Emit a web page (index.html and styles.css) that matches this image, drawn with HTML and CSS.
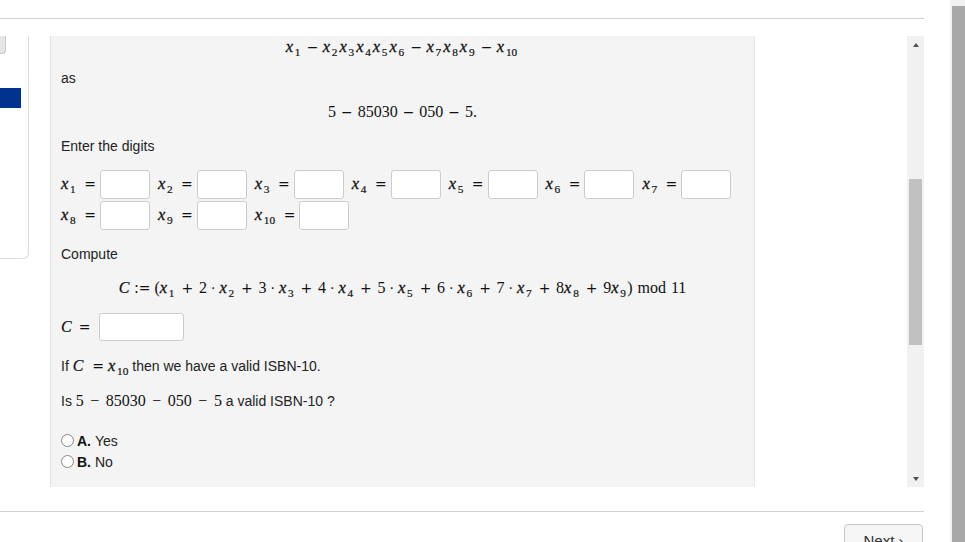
FILE: index.html
```html
<!DOCTYPE html>
<html lang="en">
<head>
<meta charset="utf-8">
<title>ISBN-10 check</title>
<link rel="stylesheet" href="styles.css">
</head>
<body>
<div class="window">
  <div class="viewport">
    <div class="topbar"></div>
    <div class="scroller">
      <div class="content">
        <div class="sidebar">
          <div class="sb-btn"></div>
          <div class="sb-active"></div>
        </div>
        <div class="question">
          <div class="disp f1"><span class="v">x</span><span class="s">1</span><span class="op">−</span><span class="v">x</span><span class="s">2</span><span class="v">x</span><span class="s">3</span><span class="v">x</span><span class="s">4</span><span class="v">x</span><span class="s">5</span><span class="v">x</span><span class="s">6</span><span class="op">−</span><span class="v">x</span><span class="s">7</span><span class="v">x</span><span class="s">8</span><span class="v">x</span><span class="s">9</span><span class="op">−</span><span class="v">x</span><span class="s">10</span></div>
          <p class="t as">as</p>
          <div class="disp f2">5<span class="op">−</span>85030<span class="op">−</span>050<span class="op">−</span>5.</div>
          <p class="t gap13">Enter the digits</p>
          <div class="fields">
            <div class="frow">
              <div class="field"><span class="m"><span class="v">x</span><span class="s">1</span><span class="eq">=</span></span><span class="box"></span></div>
              <div class="field"><span class="m"><span class="v">x</span><span class="s">2</span><span class="eq">=</span></span><span class="box"></span></div>
              <div class="field"><span class="m"><span class="v">x</span><span class="s">3</span><span class="eq">=</span></span><span class="box"></span></div>
              <div class="field"><span class="m"><span class="v">x</span><span class="s">4</span><span class="eq">=</span></span><span class="box"></span></div>
              <div class="field"><span class="m"><span class="v">x</span><span class="s">5</span><span class="eq">=</span></span><span class="box"></span></div>
              <div class="field"><span class="m"><span class="v">x</span><span class="s">6</span><span class="eq">=</span></span><span class="box"></span></div>
              <div class="field"><span class="m"><span class="v">x</span><span class="s">7</span><span class="eq">=</span></span><span class="box"></span></div>
            </div>
            <div class="frow">
              <div class="field"><span class="m"><span class="v">x</span><span class="s">8</span><span class="eq">=</span></span><span class="box"></span></div>
              <div class="field"><span class="m"><span class="v">x</span><span class="s">9</span><span class="eq">=</span></span><span class="box"></span></div>
              <div class="field"><span class="m"><span class="v">x</span><span class="s">10</span><span class="eq">=</span></span><span class="box"></span></div>
            </div>
          </div>
          <p class="t gap14">Compute</p>
          <div class="disp cform"><span class="vc">C</span><span class="rel">:<span class="eqg">=</span></span>(<span class="v">x</span><span class="s">1</span><span class="op">+</span>2<span class="dot">·</span><span class="v">x</span><span class="s">2</span><span class="op">+</span>3<span class="dot">·</span><span class="v">x</span><span class="s">3</span><span class="op">+</span>4<span class="dot">·</span><span class="v">x</span><span class="s">4</span><span class="op">+</span>5<span class="dot">·</span><span class="v">x</span><span class="s">5</span><span class="op">+</span>6<span class="dot">·</span><span class="v">x</span><span class="s">6</span><span class="op">+</span>7<span class="dot">·</span><span class="v">x</span><span class="s">7</span><span class="op">+</span>8<span class="v">x</span><span class="s">8</span><span class="op">+</span>9<span class="v">x</span><span class="s">9</span>)<span class="mod">mod</span>11</div>
          <div class="crow"><span class="m"><span class="vc">C</span><span class="eq">=</span></span><span class="box wide"></span></div>
          <p class="t gap15">If <span class="m"><span class="vc">C</span><span class="eq">=</span><span class="v">x</span><span class="s">10</span></span> then we have a valid ISBN-10.</p>
          <p class="t gap14">Is <span class="m isbn">5<span class="mm">−</span>85030<span class="mm">−</span>050<span class="mm">−</span>5</span> a valid ISBN-10 ?</p>
          <div class="choices">
            <label class="choice"><span class="radio"></span><b class="letter">A.</b>Yes</label>
            <label class="choice"><span class="radio"></span><b class="letter">B.</b>No</label>
          </div>
        </div>
      </div>
      <div class="vscroll">
        <div class="arr arr-up"></div>
        <div class="vthumb"></div>
        <div class="vspace"></div>
        <div class="arr arr-down"></div>
      </div>
    </div>
    <div class="bottombar">
      <div class="next">Next ›</div>
    </div>
  </div>
  <div class="page-scroll"><div class="page-thumb"></div></div>
</div>
</body>
</html>
```
FILE: styles.css
```css
* { box-sizing: border-box; }
html, body { margin: 0; height: 100%; overflow: hidden; background: #fff; }
body { font-family: "Liberation Sans", Arial, sans-serif; font-size: 14px; color: #222; }

.window { display: flex; width: 965px; height: 542px; }
.viewport { width: 950px; display: flex; flex-direction: column; }

.topbar { height: 19px; width: 924px; border-bottom: 1px solid #cfd2d4; flex-shrink: 0; }

.scroller { margin-top: 17px; height: 451px; width: 924px; display: flex; flex-shrink: 0; }
.content { flex: 1; display: flex; align-items: flex-start; }

.sidebar {
  width: 29px; height: 223px;
  border-right: 1px solid #ddd; border-bottom: 1px solid #ddd;
  border-bottom-right-radius: 6px;
  display: flex; flex-direction: column;
}
.sb-btn {
  width: 6px; height: 18px; background: #e6e6e6;
  border-right: 1px solid #c8c8c8; border-bottom: 1px solid #c8c8c8;
  border-bottom-right-radius: 4px;
}
.sb-active { margin-top: 34px; width: 21px; height: 20px; background: #00338d; }

.question {
  margin-left: 21px; width: 705px; align-self: stretch;
  background: #f4f4f4;
  border-left: 1px solid #e2e2e2; border-right: 1px solid #e8e8e8;
  padding: 0 10px 16px;
}

.t { margin: 0; line-height: 20px; }
.as { margin-top: 10px; }
.gap13 { margin-top: 13px; }
.gap14 { margin-top: 14px; }
.gap15 { margin-top: 15px; }

/* math */
.disp {
  text-align: center; font-family: "Liberation Serif", serif; font-size: 16px;
  line-height: 22px; height: 22px; white-space: nowrap; color: #111;
}
.f2 { margin-top: 13px; }
.cform { margin-top: 13px; }
.m { font-family: "Liberation Serif", serif; font-size: 16px; white-space: nowrap; color: #111; }
.v {
  font-family: "Liberation Serif", serif; font-style: italic; font-size: 16.5px;
  margin-right: 1.7px; -webkit-text-stroke: 0.3px #111;
}
.vc { font-style: italic; margin-right: 1px; -webkit-text-stroke: 0.2px #111; }
.s { font-size: 11.3px; vertical-align: -4px; line-height: 1; -webkit-text-stroke: 0.2px #111; }
.op { font-family: "DejaVu Sans", sans-serif; font-size: 14px; margin: 0 4.3px; }
.f1 .s { margin-right: 2px; }
.f2 .op { margin: 0 5px; }
.cform .op { margin: 0 5.7px; }
.cform .s { margin-right: 1.3px; }
.dot { font-family: "DejaVu Sans", sans-serif; font-size: 14px; margin: 0 4px; }
.rel { margin: 0 4px 0 4px; }
.eqg { font-family: "DejaVu Sans", sans-serif; font-size: 14px; }
.mod { margin: 0 5px 0 5px; }
.eq { font-family: "DejaVu Sans", sans-serif; font-size: 14px; margin-left: 8.5px; }
.t .m .eq { margin: 0 4px 0 8px; }
.mm { margin: 0 6.5px; }

.fields { margin-top: 14px; display: flex; flex-direction: column; gap: 2px; }
.frow { display: flex; }
.field { display: flex; align-items: center; margin-right: 8px; }
.box {
  display: block; width: 50px; height: 29px; background: #fff;
  border: 1px solid #ccc; border-radius: 3px; margin-left: 4px;
}
.box.wide { width: 85px; height: 28px; }
.crow { margin-top: 14px; display: flex; align-items: center; }
.crow .eq { margin-left: 6px; }
.crow .box { margin-left: 9px; }

.choices { margin-top: 19px; }
.choice { display: flex; align-items: center; height: 21px; }
.radio {
  width: 13px; height: 13px; border: 1px solid #858585; border-radius: 50%;
  background: #fff; margin-right: 3px;
}
.letter { margin-right: 4px; color: #111; }

/* inner scrollbar */
.vscroll { width: 17px; background: #f1f1f1; display: flex; flex-direction: column; align-items: center; }
.arr { height: 17px; width: 100%; display: flex; align-items: center; justify-content: center; }
.arr-up::before {
  content: ""; border-left: 3.5px solid transparent; border-right: 3.5px solid transparent;
  border-bottom: 4px solid #505050;
}
.arr-down::before {
  content: ""; border-left: 3.5px solid transparent; border-right: 3.5px solid transparent;
  border-top: 4px solid #505050;
}
.vthumb { margin-top: 126px; width: 13px; height: 166px; background: #c1c1c1; }
.vspace { flex: 1; }

.bottombar {
  margin-top: 24px; width: 924px; border-top: 1px solid #cfd2d4;
  padding: 12px 1px 0 0; display: flex; justify-content: flex-end;
}
.next {
  width: 79px; padding: 6px 0 10px; line-height: 20px; text-align: center;
  border: 1px solid #c8c8c8; border-radius: 4px; background: #f5f5f5;
  font-size: 15px; color: #333;
}

/* page scrollbar */
.page-scroll { width: 15px; background: #f1f1f1; padding: 6px 0 0 2px; }
.page-thumb { width: 13px; height: 100%; background: #a8a8a8; }
```
